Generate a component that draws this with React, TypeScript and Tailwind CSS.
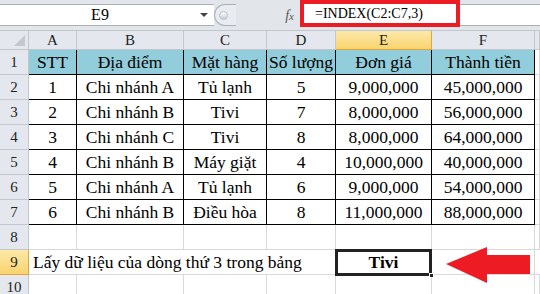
import clsx from "clsx";

const serif = "[font-family:'Liberation_Serif','Times_New_Roman',serif]";

const letters = ["A", "B", "C", "D", "E", "F", ""];

const data: string[][] = [
  ["STT", "Địa điểm", "Mặt hàng", "Số lượng", "Đơn giá", "Thành tiền"],
  ["1", "Chi nhánh A", "Tủ lạnh", "5", "9,000,000", "45,000,000"],
  ["2", "Chi nhánh B", "Tivi", "7", "8,000,000", "56,000,000"],
  ["3", "Chi nhánh C", "Tivi", "8", "8,000,000", "64,000,000"],
  ["4", "Chi nhánh B", "Máy giặt", "4", "10,000,000", "40,000,000"],
  ["5", "Chi nhánh A", "Tủ lạnh", "6", "9,000,000", "54,000,000"],
  ["6", "Chi nhánh B", "Điều hòa", "8", "11,000,000", "88,000,000"],
];

const inTable = (r: number, c: number) => r >= 1 && r <= 7 && c >= 0 && c <= 5;

const RowHead = ({ n, active }: { n: number; active?: boolean }) => (
  <div
    className={clsx(
      "h-[25px] flex items-center justify-center border-r border-b text-[15px] text-[#222]",
      active
        ? "bg-gradient-to-b from-[#fde9a9] to-[#f9d46d] border-[#e7a33a]"
        : "bg-[#e4e8ee] border-[#c2c7ce]"
    )}
  >
    {n}
  </div>
);

const Cell = ({ r, c, text }: { r: number; c: number; text?: string }) => (
  <div
    className={clsx(
      "h-[25px] flex items-center justify-center whitespace-nowrap border-r border-b text-[17.5px] text-black",
      inTable(r, c) || inTable(r, c + 1) ? "border-r-black" : "border-r-[#d9d9d9]",
      inTable(r, c) || inTable(r + 1, c) ? "border-b-black" : "border-b-[#d9d9d9]",
      r === 1 && c <= 5 ? "bg-[#92cddc]" : "bg-white"
    )}
  >
    {text}
  </div>
);

export default function App() {
  return (
    <div className={clsx("w-[540px] h-[294px] overflow-hidden bg-white", serif)}>
      {/* name box + formula bar */}
      <div className="h-[31px] flex bg-[#e2e6eb] border-b border-[#c2c7ce]">
        <div className="w-[214px] mt-[4px] h-[22px] bg-white border-t border-b border-[#a9b0b9] flex items-center">
          <span className="flex-1 text-center text-[16px] text-black">E9</span>
          <span className="mr-[6px] w-0 h-0 border-l-[4px] border-r-[4px] border-t-[4px] border-l-transparent border-r-transparent border-t-[#444]" />
        </div>
        <div className="w-[22px] mt-[4px] h-[22px] rounded-l-full bg-[#e9ecf0] border border-r-0 border-[#a9b0b9] flex items-center pl-[4px]">
          <span className="w-[9px] h-[9px] rounded-full bg-gradient-to-b from-white to-[#c9ced5] border border-[#b9bec5]" />
        </div>
        <div className="w-[64px] flex items-center justify-end pr-[6px] pt-[1px]">
          <span className="italic text-[14px] text-[#555]">
            f<span className="text-[11px]">x</span>
          </span>
        </div>
        <div className="flex-1 relative">
          <div className="mt-[4px] h-[22px] bg-white border-t border-b border-[#a9b0b9]" />
          <div className="absolute left-0 top-0 w-[160px] h-[27px] border-[4px] border-[#ed1c24] bg-white flex items-center pl-[11px] text-[14px] text-black">
            =INDEX(C2:C7,3)
          </div>
        </div>
      </div>

      {/* sheet */}
      <div className="relative grid grid-cols-[29px_48px_107px_83px_69px_96px_103px_5px]">
        {/* column headers */}
        <div className="h-[19px] bg-[#e4e8ee] border-r border-b border-[#c2c7ce] flex items-end justify-end pr-[3px] pb-[3px]">
          <svg width="11" height="11" viewBox="0 0 11 11">
            <polygon points="11,0 11,11 0,11" fill="#c3c8cf" />
          </svg>
        </div>
        {letters.map((l, i) => (
          <div
            key={i}
            className={clsx(
              "h-[19px] flex items-center justify-center border-r border-b text-[15px] text-[#222]",
              l === "E"
                ? "bg-gradient-to-b from-[#fde9a9] to-[#f9d46d] border-[#e7a33a]"
                : "bg-[#e4e8ee] border-[#c2c7ce]"
            )}
          >
            {l}
          </div>
        ))}

        {/* rows 1-8 */}
        {Array.from({ length: 8 }, (_, ri) => {
          const r = ri + 1;
          const row = data[ri] ?? [];
          return [
            <RowHead key={`h${r}`} n={r} />,
            ...Array.from({ length: 7 }, (_, c) => (
              <Cell key={`${r}-${c}`} r={r} c={c} text={row[c]} />
            )),
          ];
        })}

        {/* row 9 */}
        <RowHead n={9} active />
        <div className="col-span-4 h-[25px] flex items-center pl-[4px] whitespace-nowrap border-r border-b border-[#d9d9d9] text-[17.5px] text-black bg-white">
          Lấy dữ liệu của dòng thứ 3 trong bảng
        </div>
        <div className="relative h-[25px] border-r border-b border-[#d9d9d9] bg-white">
          <div className="absolute -left-[1px] -top-[1px] -right-[1px] -bottom-[2px] border-[3px] border-[#222] flex items-center justify-center font-bold text-[17.5px] text-black">
            Tivi
          </div>
          <span className="absolute -right-[3px] -bottom-[4px] w-[5px] h-[5px] bg-[#222] border border-white" />
        </div>
        <div className="h-[25px] border-r border-b border-[#d9d9d9] bg-white" />
        <div className="h-[25px] border-b border-[#d9d9d9] bg-white" />

        {/* row 10 */}
        <RowHead n={10} />
        {Array.from({ length: 7 }, (_, c) => (
          <div key={`10-${c}`} className="h-[25px] border-r border-[#d9d9d9] bg-white" />
        ))}

        {/* annotation arrow */}
        <svg
          className="absolute left-[446px] top-[216px]"
          width="85"
          height="37"
          viewBox="0 0 85 37"
        >
          <polygon points="0,17 41,0 41,8 84,8 84,27 41,27 41,36" fill="#ed1c24" />
        </svg>
      </div>
    </div>
  );
}
